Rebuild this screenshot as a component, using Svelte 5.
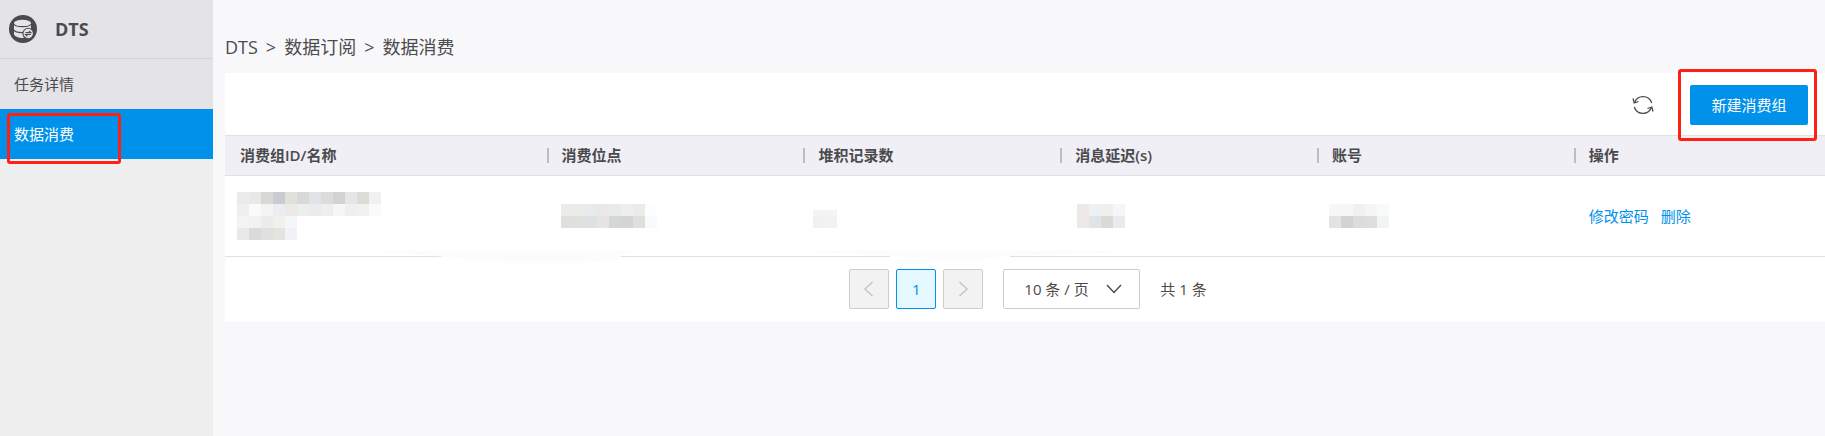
<script>
	const menu = ['任务详情', '数据消费']
	const crumbs = ['DTS', '数据订阅', '数据消费']
	const columns = ['消费组ID/名称', '消费位点', '堆积记录数', '消息延迟(s)', '账号', '操作']

	let active = '数据消费'
	let pageSize = 10
	let total = 1

	// masked cell values, one colour for each 12px block
	const masked = [
		{
			x: -3, y: 0,
			rows: [
				['#ebebeb', '#e8e8e6', '#d9d8d4', '#cacbd0', '#e0e0dd', '#d8d8d8', '#e1e3e6', '#dcdcdc', '#d2d2d2', '#e6e6e6', '#dcdcd9', '#f1f1f3'],
				['#efefef', '#fafafa', '#f3f3f1', '#ebeef1', '#ece9e7', '#eaeeec', '#eaebef', '#eeeeee', '#f6f6f6', '#efefef', '#f1f1ee', '#fafafa'],
				['#f3f3f0', '#f2f2f2', '#ececec', '#f2f0ed', '#f4f6fa'],
				['#e7eae8', '#dadada', '#e1e0de', '#e5e3e0', '#f0f2f7']
			]
		},
		{
			x: -1, y: 0,
			rows: [
				['#ebebe9', '#ebebe7', '#e8ebee', '#e8e8ea', '#e7ebea', '#eeeeee', '#ebebeb', '#fbfdff'],
				['#e0dfdc', '#dfe0e2', '#dee1e4', '#e7e5e3', '#d4d7d6', '#d5d3d4', '#dfdfdc', '#f8fafd']
			]
		},
		{
			x: -5, y: 6,
			rows: [
				['#f4f4f4', '#f4f4f4'],
				['#f1f1f1', '#f2f2f2']
			]
		},
		{
			x: -10, y: 0,
			rows: [
				['#fefefc', '#ebeae8', '#eef1f4', '#f0efed', '#f6f6f6'],
				['#fefefe', '#eee9e5', '#dfe4e8', '#dcdad7', '#e9ebee']
			]
		},
		{
			x: -3, y: 0,
			rows: [
				['#f7f7f7', '#f7f7f7', '#f0f0f0', '#f5f5f5', '#f7f9fb'],
				['#e3e3e3', '#d3d3d3', '#dcdcdd', '#e0dedb', '#f1f3f5']
			]
		}
	]
</script>

<div class="page">
	<aside class="sidebar">
		<div class="brand">
			<svg class="logo" viewBox="0 0 28 28" width="28" height="28" aria-hidden="true">
				<circle cx="14" cy="14" r="14" fill="#4b4b4d" />
				<path d="M5 8.200V19.500C6 21.800 9.500 23 14 23L22 17V8.200z" fill="#e3e3e8" />
				<ellipse cx="13.500" cy="8" rx="8.500" ry="3.200" fill="#e3e3e8" />
				<g fill="none" stroke="#4b4b4d" stroke-width="1.200">
					<path d="M5 9.200C7 12.500 20 12.500 22 9.200" />
					<path d="M5 15.200C6.500 17.200 10 17.800 14 17.600" />
				</g>
				<circle cx="19.200" cy="18.500" r="5.800" fill="#4b4b4d" />
				<circle cx="19.200" cy="18.500" r="4.700" fill="#e3e3e8" />
				<path d="M16.500 17.600h5.400l-2-1.800M21.900 19.500h-5.400l2 1.800" fill="none" stroke="#4b4b4d" stroke-width="1.100" />
			</svg>
			<span class="brand-name">DTS</span>
		</div>
		<nav>
			{#each menu as item}
				<a href="#{item}" class="menu-item" class:active={item == active}>
					{item}
					{#if item == active}
						<span class="mark"></span>
					{/if}
				</a>
			{/each}
		</nav>
	</aside>

	<main>
		<nav class="breadcrumb">
			{#each crumbs as crumb, i}
				{#if i > 0}<span>&gt;</span>{/if}
				<span>{crumb}</span>
			{/each}
		</nav>

		<section class="panel">
			<div class="toolbar">
				<button class="refresh" aria-label="刷新">
					<svg viewBox="0 0 22 22" width="22" height="22">
						<g fill="none" stroke="#4b4b4d" stroke-width="1.300">
							<path d="M2.500 9A9 9 0 0 1 19.700 9M19.500 13A9 9 0 0 1 2.300 13" />
							<path d="M1 4.500L2.200 9L6.500 7.500M21 17.500L19.800 13L15.500 14.500" />
						</g>
					</svg>
				</button>
				<div class="create-wrap">
					<button class="create">新建消费组</button>
					<span class="mark"></span>
				</div>
			</div>

			<div class="table-wrap">
				<table>
					<thead>
						<tr>
							{#each columns as column}
								<th>{column}</th>
							{/each}
						</tr>
					</thead>
					<tbody>
						<tr>
							{#each masked as cell}
								<td>
									<svg class="masked" width="120" height={cell.rows.length * 12} shape-rendering="crispEdges" aria-hidden="true">
										{#each cell.rows as row, r}
											{#each row as fill, c}
												<rect x={cell.x + c * 12} y={r == 0 ? cell.y : r * 12} width="12" height={r == 0 ? 12 - cell.y : 12} {fill} />
											{/each}
										{/each}
									</svg>
								</td>
							{/each}
							<td>
								<a href="#password">修改密码</a>
								<a href="#delete">删除</a>
							</td>
						</tr>
					</tbody>
				</table>
				<svg class="smear" width="960" height="14" aria-hidden="true">
					<path d="M217 4H396V7H217z M665 4H785V7H665z" fill="#fff" />
					<path d="M145 0H415L396 4V8Q375 12 340 12H280Q235 7 210 5Q180 3 145 0z" fill="#fcfcfc" />
					<path d="M540 0H930L785 5Q760 8 735 9Q700 8 665 5Q610 1 540 0z" fill="#fcfcfc" />
				</svg>
			</div>

			<div class="pagination">
				<button class="page-btn" disabled aria-label="上一页">
					<svg viewBox="0 0 16 16" width="16" height="16"><path d="M11.500 1L4 8L11.500 15" /></svg>
				</button>
				<button class="page-btn current">1</button>
				<button class="page-btn" disabled aria-label="下一页">
					<svg viewBox="0 0 16 16" width="16" height="16"><path d="M4.500 1L12 8L4.500 15" /></svg>
				</button>
				<div class="page-size">
					<select bind:value={pageSize} aria-label="每页条数">
						{#each [10, 20, 50] as size}
							<option value={size}>{size} 条 / 页</option>
						{/each}
					</select>
					<svg viewBox="0 0 16 16" width="16" height="16"><path d="M1 4L8 11.500L15 4" /></svg>
				</div>
				<span class="total">共 {total} 条</span>
			</div>
		</section>
	</main>
</div>

<style>
	:global(body) {
		background: #f8f8fb;
	}

	.page {
		display: flex;
		min-height: 100vh;
		color: #4b4b4d;
		font-family: "Open Sans", "Noto Sans CJK SC", sans-serif;
		font-size: 15px;
		line-height: 20px;
	}

	button, select {
		font: inherit;
		color: inherit;
	}

	a {
		color: #0091ea;
		text-decoration: none;
	}

	.sidebar {
		flex: none;
		width: 213px;
		background: #eee;
	}

	.brand {
		display: flex;
		align-items: center;
		gap: 18px;
		box-sizing: border-box;
		height: 59px;
		padding: 0 9px;
		background: #e3e3e8;
		border-bottom: 1px solid #d3d3d8;
	}

	.brand-name {
		font-size: 18px;
		font-weight: 700;
	}

	.menu-item {
		display: block;
		position: relative;
		height: 50px;
		padding-left: 14px;
		line-height: 50px;
		color: #4b4b4d;
		background: #e3e3e8;
	}

	.menu-item.active {
		color: #fff;
		background: #0091ea;
	}

	.mark {
		position: absolute;
		z-index: 1;
		box-sizing: border-box;
		border: 3px solid #ff1f14;
		border-radius: 3px;
	}

	.menu-item .mark {
		left: 7px;
		top: 4px;
		width: 114px;
		height: 51px;
	}

	main {
		flex: 1;
		min-width: 0;
		padding: 33px 0 0 12px;
	}

	.breadcrumb {
		display: flex;
		gap: 8px;
		height: 40px;
		font-size: 18px;
		line-height: 28px;
	}

	.panel {
		background: #fff;
	}

	.toolbar {
		display: flex;
		align-items: center;
		justify-content: flex-end;
		gap: 36px;
		padding: 12px 17px 10px 0;
	}

	.refresh {
		display: flex;
		padding: 0;
		border: none;
		background: none;
	}

	.create-wrap {
		position: relative;
		display: flex;
	}

	.create {
		width: 118px;
		height: 40px;
		padding: 0;
		border: none;
		border-radius: 2px;
		color: #fff;
		background: #0091ea;
	}

	.create-wrap .mark {
		inset: -16px -9px -16px -12px;
		pointer-events: none;
	}

	.table-wrap {
		position: relative;
	}

	table {
		width: 100%;
		table-layout: fixed;
		border-spacing: 0;
	}

	th, td {
		box-sizing: border-box;
		padding: 0 15px;
		text-align: left;
		border-bottom: 1px solid #e1e1e5;
	}

	th {
		position: relative;
		width: 16.05%;
		height: 41px;
		padding-bottom: 2px;
		font-weight: 600;
		background: #f0eff5;
		border-top: 1px solid #e1e1e5;
	}

	th:first-child {
		width: 20.1%;
	}

	th:last-child {
		width: auto;
	}

	th + th::before {
		content: "";
		position: absolute;
		left: 0;
		top: 12px;
		width: 2px;
		height: 15px;
		background: #bdbdbd;
	}

	td {
		height: 81px;
	}

	td a {
		margin-right: 8px;
	}

	.masked {
		display: block;
		overflow: visible;
	}

	.smear {
		position: absolute;
		left: 0;
		bottom: -8px;
	}

	.pagination {
		display: flex;
		align-items: center;
		justify-content: center;
		gap: 7px;
		padding: 12px 0 13px 6px;
	}

	.page-btn {
		display: flex;
		align-items: center;
		justify-content: center;
		width: 40px;
		height: 40px;
		padding: 0;
		border: 1px solid #ccc;
		border-radius: 2px;
		background: #f2f2f2;
	}

	.page-btn.current {
		border-color: #0091ea;
		color: #0091ea;
		background: #e5f7ff;
	}

	.pagination path {
		fill: none;
		stroke: #c4c4c4;
		stroke-width: 1.4;
	}

	.page-size {
		position: relative;
		display: flex;
		align-items: center;
		margin: 0 13px;
	}

	.page-size select {
		appearance: none;
		width: 137px;
		height: 40px;
		padding: 0 40px 0 20px;
		border: 1px solid #ccc;
		border-radius: 2px;
		background: #fff;
	}

	.page-size svg {
		position: absolute;
		right: 18px;
		pointer-events: none;
	}

	.page-size path {
		stroke: #4b4b4d;
	}
</style>
